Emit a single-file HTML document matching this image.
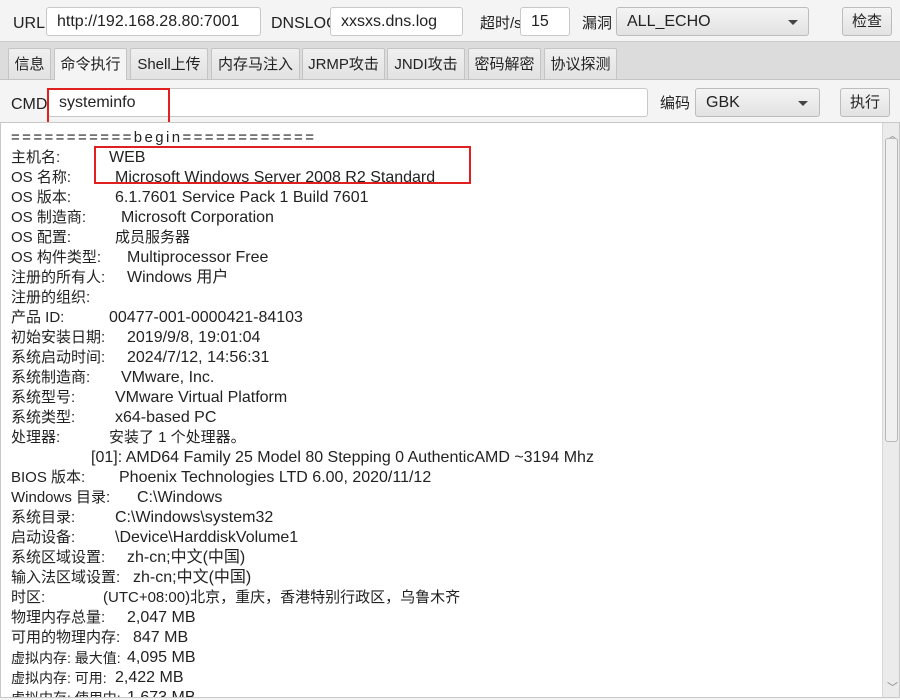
<!DOCTYPE html>
<html><head><meta charset="utf-8"><style>
*{box-sizing:border-box;margin:0;padding:0}
body{width:900px;height:700px;overflow:hidden;background:#f4f4f4;font-family:"Liberation Sans","Noto Sans CJK SC",sans-serif;font-size:15px;color:#222;position:relative}
.a{position:absolute;white-space:nowrap}
.in{position:absolute;background:#fff;border:1px solid #c8c8c8;border-radius:3px;padding-left:10px;line-height:28px;height:29px;font-size:16px}
.btn{position:absolute;background:linear-gradient(#f4f4f4,#e2e2e2);border:1px solid #bcbcbc;border-radius:3px;height:29px;line-height:28px;text-align:center;font-size:16px}
.tri{position:absolute;width:0;height:0;border-left:5px solid transparent;border-right:5px solid transparent;border-top:5px solid #444}
.tab{position:absolute;top:48px;height:31px;line-height:31px;background:linear-gradient(#f0f0f0,#e2e2e2);border:1px solid #c4c4c4;border-bottom:none;text-align:center;border-radius:2px 2px 0 0}
#out{position:absolute;left:0;top:122px;width:900px;height:576px;background:#fff;border:1px solid #c8c8c8;overflow:hidden}
.l{position:absolute;left:10px;height:20px;line-height:22px;white-space:nowrap}
.l span{position:absolute;top:0;font-size:16px}
</style></head><body>
<div class="a" style="left:13px;top:13px;line-height:22px;font-size:16px">URL</div>
<div class="in" style="left:46px;top:7px;width:215px">http://192.168.28.80:7001</div>
<div class="a" style="left:271px;top:13px;line-height:22px;font-size:16px">DNSLOG</div>
<div class="in" style="left:330px;top:7px;width:133px">xxsxs.dns.log</div>
<div class="a" style="left:480px;top:13px;line-height:22px">超时/s</div>
<div class="in" style="left:520px;top:7px;width:50px">15</div>
<div class="a" style="left:582px;top:13px;line-height:22px">漏洞</div>
<div class="btn" style="left:616px;top:7px;width:193px;text-align:left;padding-left:10px">ALL_ECHO</div>
<div class="tri" style="left:788px;top:20px"></div>
<div class="btn" style="left:842px;top:7px;width:50px;font-size:15px">检查</div>
<div class="a" style="left:0;top:41px;width:900px;height:39px;background:#dcdcdc;border-top:1px solid #ccc;border-bottom:1px solid #c4c4c4"></div>
<div class="tab" style="left:8px;width:43px">信息</div>
<div class="tab" style="left:54px;width:73px;background:#f4f4f4;height:33px">命令执行</div>
<div class="tab" style="left:130px;width:78px">Shell上传</div>
<div class="tab" style="left:211px;width:89px">内存马注入</div>
<div class="tab" style="left:302px;width:83px">JRMP攻击</div>
<div class="tab" style="left:387px;width:78px">JNDI攻击</div>
<div class="tab" style="left:468px;width:73px">密码解密</div>
<div class="tab" style="left:544px;width:73px">协议探测</div>
<div class="a" style="left:0;top:80px;width:900px;height:42px;background:#f4f4f4"></div>
<div class="a" style="left:11px;top:94px;line-height:22px;font-size:16px">CMD</div>
<div class="in" style="left:48px;top:88px;width:600px;padding-left:10px">systeminfo</div>
<div class="a" style="left:47px;top:88px;width:123px;height:39px;border:2px solid #e02020"></div>
<div class="a" style="left:660px;top:93px;line-height:22px">编码</div>
<div class="btn" style="left:695px;top:88px;width:125px;text-align:left;padding-left:10px">GBK</div>
<div class="tri" style="left:798px;top:101px"></div>
<div class="btn" style="left:840px;top:88px;width:50px;font-size:15px">执行</div>
<div id="out">
<div class="l" style="top:4px"><span style="left:0;letter-spacing:2.4px;font-size:15px">===========begin============</span></div>
<div class="l" style="top:24px">主机名:<span style="left:98px">WEB</span></div>
<div class="l" style="top:44px">OS 名称:<span style="left:104px">Microsoft Windows Server 2008 R2 Standard</span></div>
<div class="l" style="top:64px">OS 版本:<span style="left:104px">6.1.7601 Service Pack 1 Build 7601</span></div>
<div class="l" style="top:84px">OS 制造商:<span style="left:110px">Microsoft Corporation</span></div>
<div class="l" style="top:104px">OS 配置:<span style="left:104px;font-size:15px">成员服务器</span></div>
<div class="l" style="top:124px">OS 构件类型:<span style="left:116px">Multiprocessor Free</span></div>
<div class="l" style="top:144px">注册的所有人:<span style="left:116px">Windows 用户</span></div>
<div class="l" style="top:164px">注册的组织:</div>
<div class="l" style="top:184px">产品 ID:<span style="left:98px">00477-001-0000421-84103</span></div>
<div class="l" style="top:204px">初始安装日期:<span style="left:116px">2019/9/8, 19:01:04</span></div>
<div class="l" style="top:224px">系统启动时间:<span style="left:116px">2024/7/12, 14:56:31</span></div>
<div class="l" style="top:244px">系统制造商:<span style="left:110px">VMware, Inc.</span></div>
<div class="l" style="top:264px">系统型号:<span style="left:104px">VMware Virtual Platform</span></div>
<div class="l" style="top:284px">系统类型:<span style="left:104px">x64-based PC</span></div>
<div class="l" style="top:304px">处理器:<span style="left:98px;font-size:15px">安装了 1 个处理器。</span></div>
<div class="l" style="top:324px"><span style="left:80px">[01]: AMD64 Family 25 Model 80 Stepping 0 AuthenticAMD ~3194 Mhz</span></div>
<div class="l" style="top:344px">BIOS 版本:<span style="left:108px">Phoenix Technologies LTD 6.00, 2020/11/12</span></div>
<div class="l" style="top:364px">Windows 目录:<span style="left:126px">C:\Windows</span></div>
<div class="l" style="top:384px">系统目录:<span style="left:104px">C:\Windows\system32</span></div>
<div class="l" style="top:404px">启动设备:<span style="left:104px">\Device\HarddiskVolume1</span></div>
<div class="l" style="top:424px">系统区域设置:<span style="left:116px">zh-cn;中文(中国)</span></div>
<div class="l" style="top:444px">输入法区域设置:<span style="left:122px">zh-cn;中文(中国)</span></div>
<div class="l" style="top:464px">时区:<span style="left:92px;font-size:15px">(UTC+08:00)北京，重庆，香港特别行政区，乌鲁木齐</span></div>
<div class="l" style="top:484px">物理内存总量:<span style="left:116px">2,047 MB</span></div>
<div class="l" style="top:504px">可用的物理内存:<span style="left:122px">847 MB</span></div>
<div class="l" style="top:524px;font-size:14px">虚拟内存: 最大值:<span style="left:116px">4,095 MB</span></div>
<div class="l" style="top:544px;font-size:14px">虚拟内存: 可用:<span style="left:104px">2,422 MB</span></div>
<div class="l" style="top:564px;font-size:14px">虚拟内存: 使用中:<span style="left:116px">1,673 MB</span></div>
<div class="a" style="left:881px;top:0;width:18px;height:576px;background:#ebebeb;border-left:1px solid #d8d8d8"></div>
<div class="a" style="left:886px;top:4px;color:#888;font-size:11px">︿</div>
<div class="a" style="left:884px;top:15px;width:13px;height:304px;background:#f0f0f0;border:1px solid #b8b8b8;border-radius:3px"></div>
<div class="a" style="left:886px;top:556px;color:#888;font-size:11px">﹀</div>
</div>
<div class="a" style="left:94px;top:146px;width:377px;height:38px;border:2px solid #e02020"></div>
</body></html>
